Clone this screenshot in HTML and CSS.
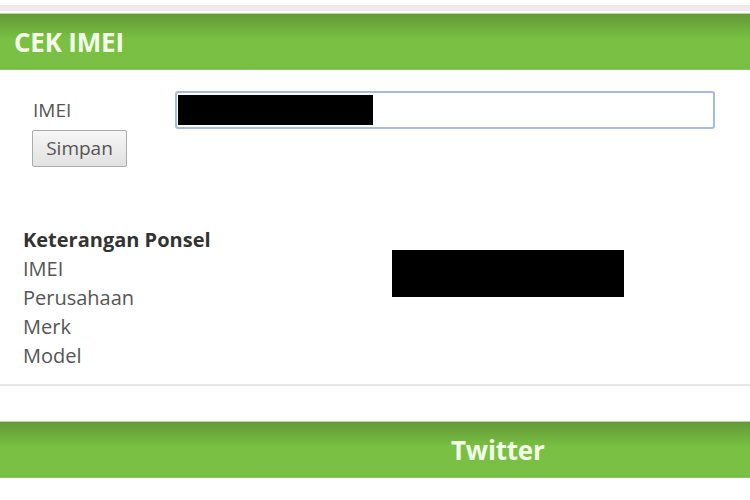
FILE: index.html
```html
<!DOCTYPE html>
<html>
<head>
<meta charset="utf-8">
<link rel="stylesheet" href="styles.css">
</head>
<body>
<div class="topband"></div>
<div class="bar"><span class="bar-title">CEK IMEI</span></div>
<div class="form">
  <div class="form-row">
    <label class="form-label">IMEI</label>
    <div class="input"><div class="redact redact-input"></div></div>
  </div>
  <button class="btn">Simpan</button>
</div>
<div class="info">
  <div class="info-labels">
    <div class="info-head">Keterangan Ponsel</div>
    <div class="info-line">IMEI</div>
    <div class="info-line">Perusahaan</div>
    <div class="info-line">Merk</div>
    <div class="info-line">Model</div>
  </div>
  <div class="info-values"><div class="redact redact-value"></div></div>
</div>
<div class="sep"></div>
<div class="bar bar-twitter"><span class="bar-title twitter-title">Twitter</span></div>
</body>
</html>
```

FILE: styles.css
```css
html, body { margin: 0; padding: 0; background: #fff; }
body { font-family: "Open Sans", "Liberation Sans", sans-serif; color: #555; width: 750px; height: 500px; overflow: hidden; }
.topband { height: 6px; margin-top: 5px; background: #efe9ef; }
.bar {
  margin-top: 2px;
  height: 55px;
  display: flex;
  align-items: center;
  background: linear-gradient(to bottom, #65983a 0%, #6fae3d 25%, #79c043 45%, #79bf43 100%);
  border-top: 1px solid #b8d99a;
  border-bottom: 1px solid #8fbf66;
}
.bar-title { font-weight: 700; font-size: 26px; color: #f3ffe8; padding-left: 14px; letter-spacing: -0.2px; }
.form { padding: 21px 0 0 32px; }
.form-row { display: flex; align-items: center; }
.form-label { width: 142px; padding-left: 1px; font-size: 19px; color: #555; }
.input {
  width: 535px; height: 34px;
  border: 2px solid #a9badf; border-radius: 3px;
  display: flex; align-items: center; padding-left: 1px;
}
.redact { background: #000; }
.redact-input { width: 195px; height: 30px; }
.btn {
  display: block; margin: 1px 0 0 0; width: 95px; height: 37px;
  font-family: "Open Sans", "Liberation Sans", sans-serif; font-size: 19px; color: #555;
  background: linear-gradient(to bottom, #f6f6f6, #e1e1e1);
  border: 1px solid #aaa; border-radius: 2px; padding: 0 0 2px 0;
}
.info { display: flex; padding: 58px 0 0 23px; }
.info-labels { width: 369px; }
.info-head { font-weight: 700; font-size: 20px; color: #333; line-height: 29px; }
.info-line { font-size: 20px; line-height: 29px; color: #555; }
.redact-value { width: 232px; height: 47px; margin-top: 25px; }
.sep { margin-top: 14px; height: 2px; background: #e8e8e8; }
.bar-twitter { margin-top: 35px; }
.twitter-title { padding-left: 451px; }
```
